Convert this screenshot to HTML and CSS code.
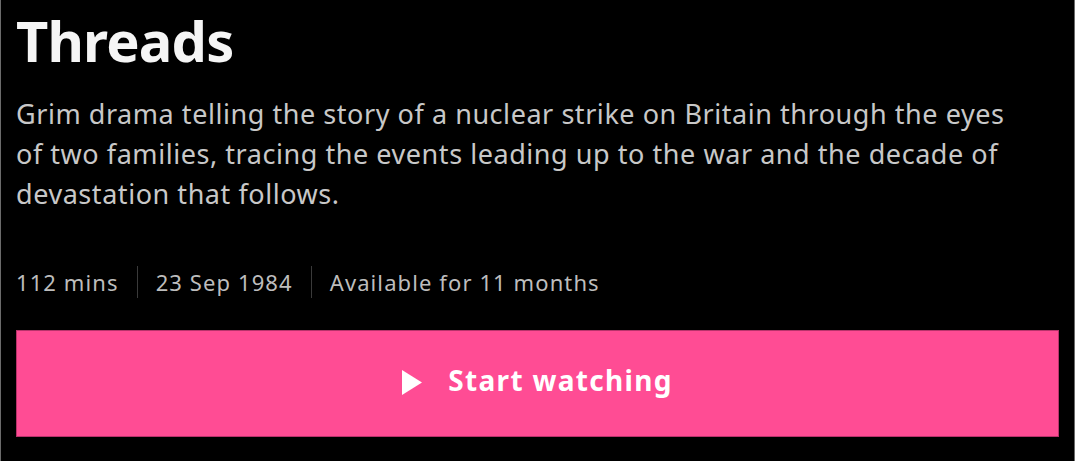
FILE: index.html
```html
<!DOCTYPE html>
<html lang="en">
<head>
<meta charset="utf-8">
<title>Threads</title>
<link rel="stylesheet" href="styles.css">
</head>
<body>
<main class="page">
  <h1 class="title">Threads</h1>
  <p class="synopsis">Grim drama telling the story of a nuclear strike on Britain through the eyes of two families, tracing the events leading up to the war and the decade of devastation that follows.</p>
  <ul class="meta">
    <li class="meta-item">112 mins</li>
    <li class="meta-item">23 Sep 1984</li>
    <li class="meta-item">Available for 11 months</li>
  </ul>
  <a class="play-button" href="#">
    <svg class="play-icon" viewBox="0 0 20 25" width="20" height="25" aria-hidden="true"><polygon points="0,0 20,12.5 0,25" fill="#fff"/></svg>
    <span class="play-label">Start watching</span>
  </a>
</main>
</body>
</html>
```

FILE: styles.css
```css
html, body {
  margin: 0;
  padding: 0;
  background: #000;
}
body {
  width: 1075px;
  height: 461px;
  box-sizing: border-box;
  border-left: 1px solid #6b6b6b;
  border-right: 1px solid #6b6b6b;
  font-family: "Noto Sans", "DejaVu Sans", sans-serif;
  overflow: hidden;
}
.page {
  padding: 0 15px 0 15px;
  display: flex;
  flex-direction: column;
}
.title {
  margin: 8px 0 0 0;
  font-size: 56px;
  line-height: 64px;
  font-weight: 700;
  letter-spacing: -0.8px;
  color: #f5f5f5;
}
.synopsis {
  margin: 22px 0 0 0;
  font-size: 27px;
  line-height: 40px;
  letter-spacing: 0.55px;
  color: #c8c8c8;
  max-width: 1010px;
}
.meta {
  list-style: none;
  margin: 52px 0 0 0;
  padding: 0;
  display: flex;
  align-items: center;
  font-size: 22px;
  line-height: 32px;
  letter-spacing: 1.1px;
  color: #bdbdbd;
}
.meta-item {
  padding: 0 18px;
  border-left: 1px solid #3a3a3a;
}
.meta-item:first-child {
  padding-left: 0;
  border-left: none;
}
.play-button {
  margin-top: 32px;
  height: 107px;
  box-sizing: border-box;
  padding-bottom: 3px;
  background: #ff4c94;
  border: 1px solid #b8336b;
  display: flex;
  align-items: center;
  justify-content: center;
  gap: 26px;
  text-decoration: none;
}
.play-label {
  font-size: 28px;
  font-weight: 700;
  letter-spacing: 1.3px;
  padding-bottom: 4px;
  color: #fff;
}
.play-icon {
  display: block;
}
```
